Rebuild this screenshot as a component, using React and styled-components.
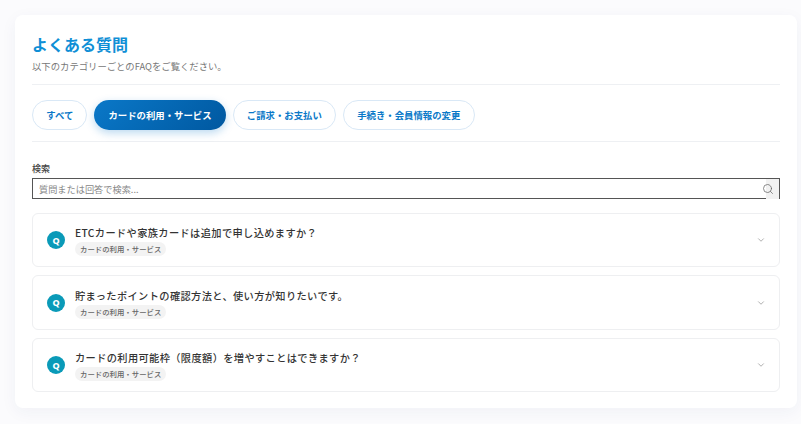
import React from 'react';
import styled, { createGlobalStyle } from 'styled-components';
import { Search, ChevronDown } from 'lucide-react';

const GlobalStyle = createGlobalStyle`
  html, body {
    margin: 0;
    padding: 0;
    background: #fbfbfd;
    font-family: "Noto Sans CJK JP", "Noto Sans", sans-serif;
  }
`;

const Page = styled.div`
  width: 801px;
  height: 424px;
  padding: 15px 4px 16px 15px;
  box-sizing: border-box;
  overflow: hidden;
`;

const Panel = styled.main`
  height: 393px;
  box-sizing: border-box;
  background: #fff;
  border-radius: 8px;
  padding: 0 17px;
  box-shadow: 0 4px 16px rgba(40, 60, 120, 0.05);
`;

const Header = styled.header`
  height: 70px;
  padding-top: 18px;
  box-sizing: border-box;
  border-bottom: 1px solid #eef0f3;
`;

const Title = styled.h1`
  margin: 0;
  font-size: 16px;
  line-height: 22px;
  font-weight: 700;
  color: #0f8fd6;
`;

const Lead = styled.p`
  margin: 4px 0 0;
  font-size: 9.35px;
  line-height: 14px;
  color: #777;
`;

const Tabs = styled.nav`
  display: flex;
  align-items: flex-start;
  gap: 7px;
  height: 57px;
  padding-top: 15px;
  box-sizing: border-box;
  border-bottom: 1px solid #eef0f3;
`;

const Tab = styled.button`
  height: 30px;
  padding: 0 ${p => (p.$active ? '14px' : '13.2px')};
  box-sizing: border-box;
  border-radius: 15px;
  font: 700 9.4px "Noto Sans CJK JP", sans-serif;
  white-space: nowrap;
  border: ${p => (p.$active ? 'none' : '1px solid #d9e8f6')};
  color: ${p => (p.$active ? '#fff' : '#0a78c8')};
  background: ${p => (p.$active ? 'linear-gradient(135deg, #0a78c8, #0058a0)' : '#fff')};
  box-shadow: ${p => (p.$active ? '0 3px 8px rgba(10, 120, 200, 0.28)' : 'none')};
`;

const SearchBox = styled.section`
  margin-top: 20px;
`;

const Label = styled.label`
  display: block;
  font-size: 9px;
  line-height: 14px;
  font-weight: 500;
  color: #444;
  margin-bottom: 2px;
`;

const InputWrap = styled.div`
  position: relative;
`;

const Input = styled.input`
  display: block;
  width: 100%;
  height: 21px;
  box-sizing: border-box;
  padding: 0 6px;
  border: 1px solid #555;
  border-radius: 0;
  outline: none;
  font: 400 9.2px "Noto Sans CJK JP", sans-serif;
  color: #333;
  &::placeholder {
    color: #888;
  }
`;

const SearchButton = styled.span`
  position: absolute;
  top: 1px;
  right: 0;
  width: 14px;
  height: 20px;
  background: #f1f1f1;
  border-right: 1px solid #555;
  box-sizing: border-box;
  color: #666;
  svg {
    position: absolute;
    right: 5px;
    top: 4px;
  }
`;

const List = styled.div`
  display: flex;
  flex-direction: column;
  gap: 8px;
  margin-top: 14px;
`;

const Item = styled.article`
  display: flex;
  align-items: center;
  height: ${p => p.$h}px;
  box-sizing: border-box;
  padding: 0 14px;
  border: 1px solid #eeeff1;
  border-radius: 6px;
  background: #fff;
`;

const QBadge = styled.span`
  flex: none;
  width: 18px;
  height: 18px;
  border-radius: 50%;
  background: #0a9ab8;
  color: #fff;
  font: 800 9px "Noto Sans", sans-serif;
  display: flex;
  align-items: center;
  justify-content: center;
  margin-right: 10px;
`;

const Body = styled.div`
  flex: 1;
  min-width: 0;
`;

const Question = styled.h2`
  margin: 0;
  font-size: 10.2px;
  line-height: 17px;
  font-weight: 500;
  letter-spacing: 0.4px;
  color: #333;
`;

const Tag = styled.span`
  display: block;
  width: fit-content;
  margin-top: 1px;
  height: 14px;
  line-height: 14px;
  padding: 0 5px;
  border-radius: 7px;
  background: #f3f3f3;
  font-size: 7.4px;
  font-weight: 500;
  color: #666;
`;

const Chevron = styled(ChevronDown)`
  flex: none;
  color: #808080;
  margin-right: -1px;
`;

const faqs = [
  { q: 'ETCカードや家族カードは追加で申し込めますか？', h: 54 },
  { q: '貯まったポイントの確認方法と、使い方が知りたいです。', h: 55 },
  { q: 'カードの利用可能枠（限度額）を増やすことはできますか？', h: 54 },
];

const tabs = ['すべて', 'カードの利用・サービス', 'ご請求・お支払い', '手続き・会員情報の変更'];

export default function App() {
  return (
    <Page>
      <GlobalStyle />
      <Panel>
        <Header>
          <Title>よくある質問</Title>
          <Lead>以下のカテゴリーごとのFAQをご覧ください。</Lead>
        </Header>
        <Tabs>
          {tabs.map((t, i) => (
            <Tab key={t} $active={i === 1}>{t}</Tab>
          ))}
        </Tabs>
        <SearchBox>
          <Label>検索</Label>
          <InputWrap>
            <Input placeholder="質問または回答で検索..." />
            <SearchButton><Search size={12} strokeWidth={1.5} /></SearchButton>
          </InputWrap>
        </SearchBox>
        <List>
          {faqs.map(f => (
            <Item key={f.q} $h={f.h}>
              <QBadge>Q</QBadge>
              <Body>
                <Question>{f.q}</Question>
                <Tag>カードの利用・サービス</Tag>
              </Body>
              <Chevron size={10} strokeWidth={1.5} />
            </Item>
          ))}
        </List>
      </Panel>
    </Page>
  );
}
